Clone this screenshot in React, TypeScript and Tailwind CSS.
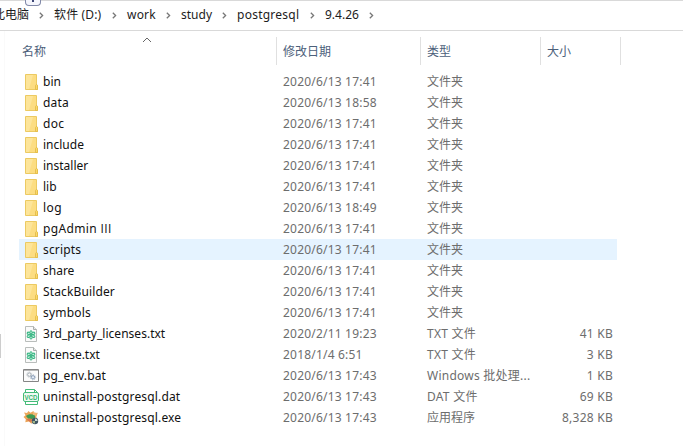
import React from "react";

type Kind = "folder" | "txt" | "bat" | "dat" | "exe";
type Row = { name: string; date: string; type: string; size?: string; kind: Kind; track?: string; active?: boolean };

const rows: Row[] = [
  { name: "bin", date: "2020/6/13 17:41", type: "文件夹", kind: "folder" },
  { name: "data", date: "2020/6/13 18:58", type: "文件夹", kind: "folder", track: "tracking-[0.2px]" },
  { name: "doc", date: "2020/6/13 17:41", type: "文件夹", kind: "folder", track: "tracking-[0.3px]" },
  { name: "include", date: "2020/6/13 17:41", type: "文件夹", kind: "folder" },
  { name: "installer", date: "2020/6/13 17:41", type: "文件夹", kind: "folder" },
  { name: "lib", date: "2020/6/13 17:41", type: "文件夹", kind: "folder" },
  { name: "log", date: "2020/6/13 18:49", type: "文件夹", kind: "folder", track: "tracking-[0.4px]" },
  { name: "pgAdmin III", date: "2020/6/13 17:41", type: "文件夹", kind: "folder", track: "tracking-[0.35px]" },
  { name: "scripts", date: "2020/6/13 17:41", type: "文件夹", kind: "folder", track: "tracking-[0.15px]", active: true },
  { name: "share", date: "2020/6/13 17:41", type: "文件夹", kind: "folder" },
  { name: "StackBuilder", date: "2020/6/13 17:41", type: "文件夹", kind: "folder", track: "tracking-[0.13px]" },
  { name: "symbols", date: "2020/6/13 17:41", type: "文件夹", kind: "folder", track: "tracking-[0.2px]" },
  { name: "3rd_party_licenses.txt", date: "2020/2/11 19:23", type: "TXT 文件", size: "41 KB", kind: "txt", track: "tracking-[0.02px]" },
  { name: "license.txt", date: "2018/1/4 6:51", type: "TXT 文件", size: "3 KB", kind: "txt" },
  { name: "pg_env.bat", date: "2020/6/13 17:43", type: "Windows 批处理...", size: "1 KB", kind: "bat", track: "tracking-[0.15px]" },
  { name: "uninstall-postgresql.dat", date: "2020/6/13 17:43", type: "DAT 文件", size: "69 KB", kind: "dat", track: "tracking-[0.15px]" },
  { name: "uninstall-postgresql.exe", date: "2020/6/13 17:43", type: "应用程序", size: "8,328 KB", kind: "exe", track: "tracking-[0.15px]" },
];

function FileIcon({ kind }: { kind: Kind }) {
  return (
    <svg width="18" height="18" viewBox="0 0 18 18" className="shrink-0">
      {kind === "folder" && (
        <>
          <path d="M2.5 1.5h11v10l1 .8v4.2h-12z" fill="#fcdd82" stroke="#ecca62" />
          <path d="M3 2h7L6 16H3z" fill="#fde59a" />
          <path d="M12.5 16.5v-4l1-1.2 1 1.2v4z" fill="#fbd968" stroke="#dfb848" strokeWidth=".8" />
        </>
      )}
      {kind === "txt" && (
        <>
          <path d="M2.5 1.5h8l3 3v12h-11z" fill="#fafafa" stroke="#b9bdbb" />
          <path d="M10.5 1.5v3h3" fill="#e8e8e8" stroke="#a9adab" />
          <g fill="#c5ecdb" stroke="#35b581" strokeWidth="1">
            <ellipse cx="8" cy="7.5" rx="1.2" ry="1.8" />
            <ellipse cx="8" cy="12.3" rx="1.2" ry="1.8" />
            <ellipse cx="5.8" cy="8.6" rx="1.2" ry="1.8" transform="rotate(-60 5.8 8.6)" />
            <ellipse cx="10.2" cy="8.6" rx="1.2" ry="1.8" transform="rotate(60 10.2 8.6)" />
            <ellipse cx="5.8" cy="11.1" rx="1.2" ry="1.8" transform="rotate(60 5.8 11.1)" />
            <ellipse cx="10.2" cy="11.1" rx="1.2" ry="1.8" transform="rotate(-60 10.2 11.1)" />
          </g>
        </>
      )}
      {kind === "bat" && (
        <>
          <path d="M.5 2.5h15v12H.5z" fill="#fbfbfb" stroke="#858585" />
          <path d="M1 3.5h14" stroke="#bababa" />
          <circle cx="6.3" cy="7.6" r="1.7" fill="none" stroke="#a3abb3" />
          <circle cx="6.3" cy="7.6" r="2.6" fill="none" stroke="#adb4bb" strokeWidth=".8" strokeDasharray="1 1" />
          <circle cx="10" cy="10.3" r="1.7" fill="#e5edf7" stroke="#8b9db5" />
          <circle cx="10" cy="10.3" r="2.6" fill="none" stroke="#9aabc0" strokeWidth=".8" strokeDasharray="1 1" />
        </>
      )}
      {kind === "dat" && (
        <>
          <g fill="none" stroke="#43bb78">
            <path d="M2.5 5V1.5h9l3 3V5M2.5 13v3.5h12V13M11.5 1.5v3h3" />
            <rect x=".5" y="4.5" width="15" height="9" rx="1.5" fill="#effaf3" />
          </g>
          <text x="1.5" y="11.7" textLength="13" lengthAdjust="spacingAndGlyphs" fill="#38b56f" className="font-['Liberation_Sans',sans-serif] text-[7.5px] font-bold">VCD</text>
        </>
      )}
      {kind === "exe" && (
        <>
          <path d="M1 3.5l3 .6 1.5-2 2 1.6 3-1.6.7 2.2 3.6-.5-1.5 4 1 3-3.5 1-2.5 3-2.3-2.2-3.7.7.5-3L.5 8l2-1.7z" fill="#eba65a" />
          <path d="M3 7c2-1.8 5-2.2 9-1v3L8.5 10 5 9.4z" fill="#3f9a50" />
          <path d="M3 10.5l4-1 3 1.6-2.6 2z" fill="#d9774d" />
          <path d="M10 3l4 1-1 3-3-1.2z" fill="#efb878" />
          <circle cx="12" cy="12" r="3.2" fill="#3f5563" />
          <path d="M12 9.5a2.5 2.5 0 0 1 2.5 2.5H12z" fill="#c9d8cf" />
          <path d="M12 14.5A2.5 2.5 0 0 1 9.500 12H12z" fill="#9fb68a" />
        </>
      )}
    </svg>
  );
}

function Chevron({ className }: { className: string }) {
  return (
    <svg width="5" height="7" viewBox="0 0 5 7" className={`shrink-0 ${className}`}>
      <path d="M.8.8L3.6 3.5.8 6.2" fill="none" stroke="#777" strokeWidth="1.3" />
    </svg>
  );
}

function Name({ text }: { text: string }) {
  const [stem, numeral] = text.split(" ");
  if (!numeral) return <>{text}</>;
  return (
    <>
      {stem} <span className="font-['Open_Sans',sans-serif]">{numeral}</span>
    </>
  );
}

export default function App() {
  return (
    <div className="relative flex h-[446px] w-[683px] flex-col overflow-hidden bg-white text-[12px] leading-[21px] whitespace-nowrap font-['Noto_Sans','Noto_Sans_CJK_SC',sans-serif]">
      <div className="flex h-[31px] shrink-0 items-center border-t border-b border-[#d9d9d9] pb-[2px] text-[#1c1c1c]">
        <span className="-ml-[7px] w-[36px]">此电脑</span>
        <Chevron className="ml-[10px] mt-[2px]" />
        <span className="ml-[10px] w-[48px] tracking-[0.15px]">软件 (D:)</span>
        <Chevron className="ml-[10px] mt-[2px]" />
        <span className="ml-[10px] w-[29px] tracking-[0.2px]">work</span>
        <Chevron className="ml-[10px] mt-[2px]" />
        <span className="ml-[10px] w-[31px]">study</span>
        <Chevron className="ml-[10px] mt-[2px]" />
        <span className="ml-[10px] w-[63px] tracking-[0.25px]">postgresql</span>
        <Chevron className="ml-[10px] mt-[2px]" />
        <span className="ml-[10px] w-[34px]">9.4.26</span>
        <Chevron className="ml-[10px] mt-[2px]" />
      </div>
      <div className="absolute left-[25px] top-0 h-[6px] w-4 rounded-b-sm border border-t-0 border-[#8088a8] bg-[#f5f6fd]">
        <div className="mx-auto h-[2px] w-[2px] bg-[#3c4675]" />
      </div>
      <svg width="10" height="6" viewBox="0 0 10 6" className="absolute left-[142px] top-[37px]">
        <path d="M1 5l4-4 4 4" fill="none" stroke="#666" />
      </svg>
      <div className="flex h-10 shrink-0 text-[#4c607a]">
        <div className="mt-[6px] h-[28px] w-[277px] border-r border-[#e0e0e0] pl-[22px] pt-1">名称</div>
        <div className="mt-[6px] h-[28px] w-[144px] border-r border-[#e0e0e0] pl-[6px] pt-1">修改日期</div>
        <div className="mt-[6px] h-[28px] w-[120px] border-r border-[#e0e0e0] pl-[6px] pt-1">类型</div>
        <div className="mt-[6px] h-[28px] w-[80px] border-r border-[#e0e0e0] pl-[6px] pt-1">大小</div>
      </div>
      <div className="absolute left-0 top-[334px] h-[24px] w-px bg-[#cdcdcd]" />
      <div className="absolute left-[4px] top-[31px] h-[415px] w-px bg-[#fafafa]" />
      <div className="ml-[19px] flex w-[598px] flex-col">
        {rows.map((r) => (
          <div key={r.name} className={`flex h-[21px] items-center ${r.active ? "bg-[#e5f3ff]" : ""}`}>
            <div className="flex w-[264px] items-center pl-1">
              <FileIcon kind={r.kind} />
              <span className={`ml-[2px] text-[#111] ${r.track ?? ""}`}>
                <Name text={r.name} />
              </span>
            </div>
            <span className="w-[144px] tracking-[0.2px] text-[#6d6d6d]">{r.date}</span>
            <span className={`w-[110px] text-[#6d6d6d] ${r.size && r.kind !== "exe" ? "tracking-[0.25px]" : ""}`}>{r.type}</span>
            <span className="w-[76px] text-right tracking-[0.25px] text-[#6d6d6d]">{r.size}</span>
          </div>
        ))}
      </div>
    </div>
  );
}
